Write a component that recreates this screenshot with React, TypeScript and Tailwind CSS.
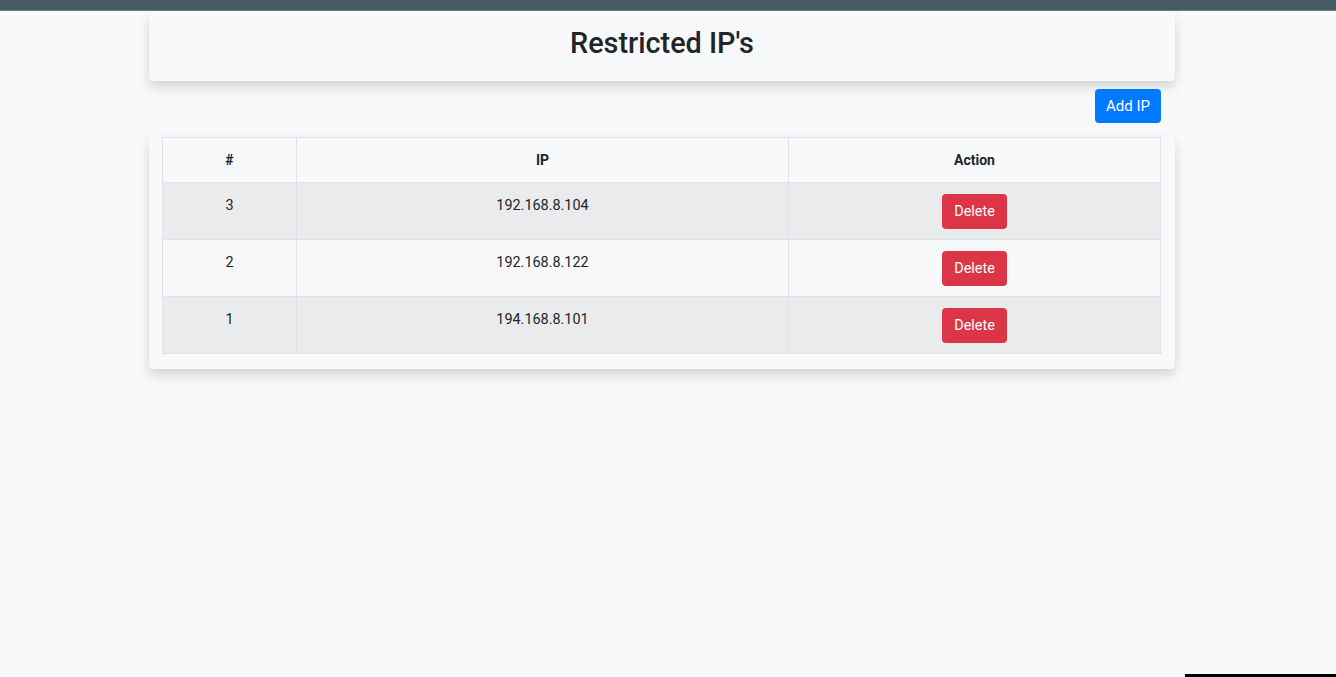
import React from "react";

const ips = [
  { id: 3, ip: "192.168.8.104" },
  { id: 2, ip: "192.168.8.122" },
  { id: 1, ip: "194.168.8.101" },
];

const App = () => {
  return (
    <div
      className="relative min-h-[677px] bg-[#f8f9fa] text-[#212529]"
      style={{ fontFamily: "Roboto, 'Liberation Sans', sans-serif" }}
    >
      <div className="h-[11px] bg-[#455a64] border-b border-[#6b7f89]" />

      <div className="mx-[149px] w-[1026px]">
        <div className="h-[70px] rounded-[4px] bg-[#f8f9fa] shadow-[0_6px_12px_rgba(0,0,0,0.15)] flex items-center justify-center">
          <h1 className="text-[28.8px] font-medium leading-[1.2] pb-[5px]">Restricted IP's</h1>
        </div>

        <div className="flex justify-end pr-[14px] mt-[8px]">
          <button className="h-[34px] px-[11px] rounded-[4px] bg-[#007bff] text-white text-[15px] pt-[1px]">
            Add IP
          </button>
        </div>

        <div className="mt-[14px] rounded-[4px] bg-[#f8f9fa] shadow-[0_6px_12px_rgba(0,0,0,0.15)] pl-[13px] pr-[14px] pb-[15px]">
          <table className="w-full border-collapse text-[14.4px]">
            <thead>
              <tr className="h-[45px]">
                <th className="w-[134px] border border-[#dee2e6] font-bold text-[14px]">#</th>
                <th className="w-[492px] border border-[#dee2e6] font-bold text-[14px]">IP</th>
                <th className="border border-[#dee2e6] font-bold text-[14px]">Action</th>
              </tr>
            </thead>
            <tbody>
              {ips.map((row, index) => (
                <tr
                  key={row.id}
                  className={index % 2 === 0 ? "h-[57px] bg-[#eaebec]" : "h-[57px] bg-[#f8f9fa]"}
                >
                  <td className="border border-[#dee2e6] text-center align-top pt-[12px] leading-[22px]">{row.id}</td>
                  <td className="border border-[#dee2e6] text-center align-top pt-[12px] leading-[22px]">{row.ip}</td>
                  <td className="border border-[#dee2e6] text-center align-middle">
                    <button className="h-[35px] w-[65px] rounded-[4px] bg-[#dc3545] text-white text-[14.4px] pt-[2px]">
                      Delete
                    </button>
                  </td>
                </tr>
              ))}
            </tbody>
          </table>
        </div>
      </div>

      <div className="absolute right-0 bottom-0 h-[3px] w-[151px] bg-black" />
    </div>
  );
};

export default App;
